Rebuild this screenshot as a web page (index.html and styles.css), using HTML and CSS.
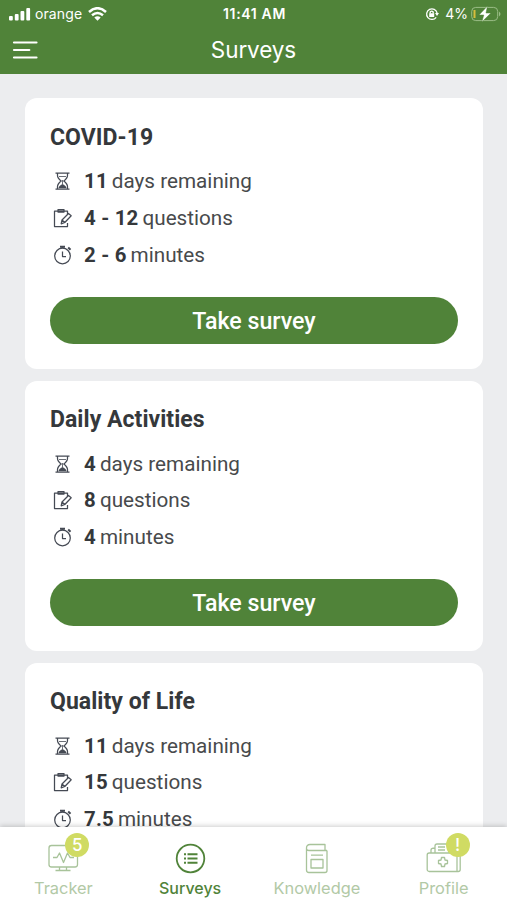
FILE: index.html
```html
<!DOCTYPE html>
<html lang="en">
<head>
<meta charset="utf-8">
<title>Surveys</title>
<link rel="stylesheet" href="styles.css">
</head>
<body>
<svg class="defs" width="0" height="0">
  <symbol id="hourglass" viewBox="0 0 20 20"><path d="M2.500 2h14M2.500 18h14M4.500 2.500v2q0 2.500 3.700 5.500-3.700 3-3.700 5.500v2M14.500 2.500v2q0 2.500-3.700 5.500 3.700 3 3.700 5.500v2"/><path stroke-width=".8" d="M6 5.500h7M9.500 9v4"/><path class="solid" stroke="none" d="M5.500 17.300q.3-2.600 4-4.300 3.700 1.700 4 4.300z"/></symbol>
  <symbol id="clipboard" viewBox="0 0 20 20"><path d="M14.500 6.500V3H1.500v15.500h13v-3.500M5 1.500h6v2.500H5z"/><path d="M9 12l6.500-6.500 2.700 2.200-6.400 6.800-3.600 1.300zM9 12l2.800 2.500"/></symbol>
  <symbol id="timer" viewBox="0 0 20 20"><circle cx="9.500" cy="11" r="7.800"/><path d="M9.500 6.500v5h3.500"/><path stroke-width="2" d="M7 1.700h5M9.500 1.700v1.500M15.200 2.500l2.300 2.300"/></symbol>
</svg>
<div class="app">
  <header class="header">
    <div class="status">
      <div class="carrier">
        <svg width="24" height="14" viewBox="0 0 24 14" fill="#fff"><rect x="1" y="9" width="3.800" height="4.500" rx="1"/><rect x="6.800" y="7" width="3.800" height="6.500" rx="1"/><rect x="12.500" y="4" width="3.800" height="9.500" rx="1"/><rect x="18.300" y="1" width="3.800" height="12.500" rx="1"/></svg>
        <span class="network">orange</span>
        <svg width="19" height="14" viewBox="0 0 19 14" fill="none" stroke="#fff" stroke-width="2.500"><path d="M1 5q8.500-7.600 17 0M4 8.300q5.500-4.700 11 0"/><path fill="#fff" stroke="none" d="M6.300 10.400q3.200-2.500 6.400 0L9.500 13.700z"/></svg>
      </div>
      <div class="time">11:41 AM</div>
      <div class="power">
        <svg width="14" height="14" viewBox="0 0 14 14" fill="none" stroke="#fff" stroke-width="1.300"><path d="M11.200 10.300a5.300 5.300 0 1 1 .9-4.300"/><path fill="#fff" stroke="none" d="M10 6h4l-2 3zM4.200 6.300h5v3.800h-5z"/><path d="M5.200 6.500V5q1.500-1.800 3 0v1.500"/></svg>
        <span class="percent">4%</span>
        <svg width="30" height="16" viewBox="0 0 30 16" fill="none"><rect x=".7" y="1.400" width="26" height="13.200" rx="4" stroke="#9bbd87"/><path fill="#9bbd87" d="M28 5.500q3 2.500 0 5z"/><path stroke="#d6bd3c" stroke-width="2" d="M3.500 4v8"/><path fill="#fff" stroke="#508339" stroke-width=".5" d="M16.500 0L8 9h4.800l-2 7L20 7h-5z"/></svg>
      </div>
    </div>
    <div class="titlebar">
      <svg class="menu" width="26" height="20" viewBox="0 0 26 20" fill="none" stroke="#fff" stroke-width="2.200" stroke-linecap="round"><path d="M2 2.500h22.500M2 10h15.300M2 17.500h22.500"/></svg>
      <h1>Surveys</h1>
    </div>
  </header>
  <main class="list">
    <section class="card">
      <h2>COVID-19</h2>
      <div class="row"><svg><use href="#hourglass"/></svg><b>11</b><span>days remaining</span></div>
      <div class="row"><svg><use href="#clipboard"/></svg><b>4 - 12</b><span>questions</span></div>
      <div class="row"><svg><use href="#timer"/></svg><b>2 - 6</b><span>minutes</span></div>
      <button>Take survey</button>
    </section>
    <section class="card">
      <h2>Daily Activities</h2>
      <div class="row"><svg><use href="#hourglass"/></svg><b>4</b><span>days remaining</span></div>
      <div class="row"><svg><use href="#clipboard"/></svg><b>8</b><span>questions</span></div>
      <div class="row"><svg><use href="#timer"/></svg><b>4</b><span>minutes</span></div>
      <button>Take survey</button>
    </section>
    <section class="card">
      <h2>Quality of Life</h2>
      <div class="row"><svg><use href="#hourglass"/></svg><b>11</b><span>days remaining</span></div>
      <div class="row"><svg><use href="#clipboard"/></svg><b>15</b><span>questions</span></div>
      <div class="row"><svg><use href="#timer"/></svg><b>7.5</b><span>minutes</span></div>
    </section>
  </main>
  <nav class="tabs">
    <div class="tab">
      <div class="icon"><svg width="36" height="32" viewBox="0 0 36 32"><rect x="4" y="3.500" width="28.500" height="21.500" rx="2.500"/><path d="M8 15.500h4l2.500-4.500 4 9.500 4-9.500 2.500 4.500h4M14.500 25v3M21.500 25v3M10.500 28.500h15"/></svg><span class="badge">5</span></div>
      <span class="label">Tracker</span>
    </div>
    <div class="tab active">
      <div class="icon"><svg width="36" height="32" viewBox="0 0 36 32"><circle cx="18.500" cy="16.500" r="13.800" stroke-width="1.800"/><path stroke-width="1.900" d="M12 12.200h2M15.500 12.200h10M12 16.500h2M15.500 16.500h10M12 20.800h2M15.500 20.800h10"/></svg></div>
      <span class="label">Surveys</span>
    </div>
    <div class="tab">
      <div class="icon"><svg width="36" height="32" viewBox="0 0 36 32"><path d="M28 8.500v20q0 2-2 2H10q-2.500 0-2.500-2.500V6q0-3.500 3.500-3.500h15v6H10q-2.500 0-2.500-2M26 8.500h2M12 13.200h12"/><rect x="12" y="17.500" width="12" height="8.500"/></svg></div>
      <span class="label">Knowledge</span>
    </div>
    <div class="tab">
      <div class="icon"><svg width="36" height="32" viewBox="0 0 36 32"><rect x="1.200" y="11" width="33" height="18.500" rx="2"/><path d="M31 11v18.500M5 11V8q0-2 4-2M9 11V4q0-2 2-2h12v9M12 5h7M12 8h7M15.500 15.500h3l.5 2.500 2.500.5v3l-2.500.5-.5 2.500h-3l-.5-2.500-2.500-.5v-3l2.500-.5z"/></svg><span class="badge">!</span></div>
      <span class="label">Profile</span>
    </div>
  </nav>
</div>
</body>
</html>
```

FILE: styles.css
```css
* { box-sizing: border-box; }
body { margin: 0; font-family: Roboto, "Liberation Sans", sans-serif; color: #35383b; }
.defs { position: absolute; }
.app { display: flex; flex-direction: column; height: 900px; overflow: hidden; background: #ecedef; }
.header { flex: none; height: 74px; background: #508339; color: #fff; font-family: Inter, sans-serif; }
.status { display: grid; grid-template-columns: 1fr auto 1fr; height: 27px; align-items: center; padding: 1px 6px 0 8px; font-size: 14px; line-height: 20px; }
.carrier, .power { display: flex; align-items: center; }
.network { margin: 0 6px 0 3px; letter-spacing: .1px; }
.time { font-weight: 600; letter-spacing: .65px; }
.power { justify-content: flex-end; }
.percent { margin: 0 3px 0 6px; }
.titlebar { display: grid; grid-template-columns: 1fr auto 1fr; align-items: center; height: 46px; padding: 0 12px; }
h1 { margin: 0; font-size: 22.500px; line-height: 30px; font-weight: 400; letter-spacing: -.1px; }
.list { flex: 1; min-height: 0; overflow: hidden; display: flex; flex-direction: column; gap: 12px; padding: 24.400px 24px 0 25px; }
.card { flex: none; height: 270.200px; padding: 25.500px 25px 24px; background: #fff; border-radius: 12px; }
h2 { margin: 0 0 10.800px; font-size: 23px; line-height: 28.500px; font-weight: 700; letter-spacing: .05px; }
.row { display: flex; align-items: center; height: 36.600px; font-size: 20.700px; gap: 4px; }
.row svg { width: 20px; height: 20px; margin: 0 7px 0 3px; fill: none; stroke: #454a54; stroke-width: 1.250; stroke-linejoin: round; }
.row .solid, .solid { fill: #454a54; }
.row b { font-size: 20.400px; font-weight: 700; letter-spacing: .2px; }
.row span { color: #484a4c; }
button { display: block; width: 408px; height: 47px; margin: 23.800px 0 0; padding: 2px 0 0; border: 0; border-radius: 24px; background: #508339; color: #fff; font: 500 23.200px/45px Roboto, sans-serif; }
.tabs { position: relative; flex: none; display: grid; grid-template-columns: repeat(4, 1fr); height: 73px; padding-top: 15px; background: #fff; box-shadow: 0 -1px 5px rgba(0,0,0,.2); color: #b2c9a6; font-family: Inter, sans-serif; }
.tab { display: flex; flex-direction: column; align-items: center; }
.tab svg { display: block; fill: none; stroke: #a8c39a; stroke-width: 1.300; stroke-linejoin: round; }
.icon { position: relative; }
.tab.active { color: #508339; }
.tab.active svg { stroke: #508339; }
.label { font-size: 16.400px; line-height: 20px; margin-top: 4px; }
.active .label { font-size: 16px; font-weight: 500; }
.badge { position: absolute; left: 20px; top: -9px; width: 24px; height: 24px; border-radius: 50%; background: #d0db63; color: #fff; font-size: 17px; line-height: 24px; text-align: center; font-weight: 500; }
```
